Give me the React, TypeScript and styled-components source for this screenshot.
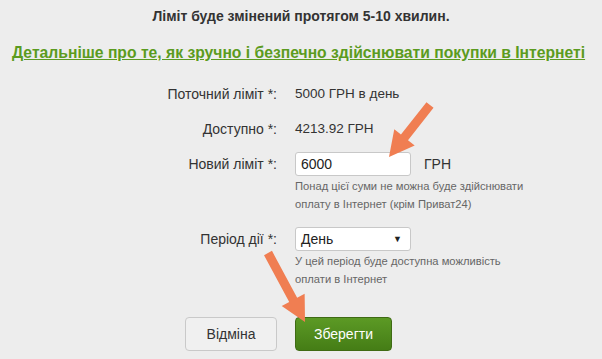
import React from "react"
import styled, { createGlobalStyle } from "styled-components"

const GlobalStyle = createGlobalStyle`
  html, body {
    margin: 0;
    padding: 0;
    background: #ededed;
  }
  body {
    font-family: "Liberation Sans", Arial, sans-serif;
    color: #333;
  }
`

const Page = styled.div`
  position: relative;
  width: 602px;
  height: 359px;
  overflow: hidden;
  background: #ededed;
`

const Notice = styled.div`
  padding-top: 8px;
  text-align: center;
  font-size: 14px;
  font-weight: bold;
  line-height: 17px;
  color: #333;
`

const MoreLink = styled.a`
  display: block;
  margin-top: 19px;
  padding-left: 12px;
  font-size: 15.7px;
  font-weight: bold;
  line-height: 18px;
  color: #5b9b20;
  text-decoration: underline;
  white-space: nowrap;
`

const Form = styled.div`
  display: grid;
  grid-template-columns: 277px 1fr;
  column-gap: 18px;
  margin-top: 10px;
`

const Label = styled.div<{ $top?: number }>`
  text-align: right;
  font-size: 14px;
  line-height: 16px;
  color: #333;
  padding-top: ${p => p.$top ?? 0}px;
`

const Value = styled.div<{ $top?: number }>`
  font-size: 13.5px;
  line-height: 16px;
  color: #333;
  padding-top: ${p => p.$top ?? 0}px;
`

const Field = styled.div`
  display: flex;
  align-items: center;
  gap: 13px;
`

const TextInput = styled.div`
  box-sizing: border-box;
  width: 116px;
  height: 24px;
  background: #fff;
  border: 1px solid #c8c8c8;
  border-radius: 3px;
  padding: 0 5px;
  font-size: 14px;
  line-height: 22px;
  color: #222;
`

const Select = styled(TextInput)`
  display: flex;
  justify-content: space-between;
  align-items: center;
  padding-right: 8px;
`

const Caret = styled.span`
  font-size: 9px;
  color: #222;
`

const Unit = styled.span`
  font-size: 14px;
  color: #333;
`

const Hint = styled.div`
  margin-top: 1px;
  font-size: 11.2px;
  line-height: 18px;
  color: #666;
`

const Buttons = styled.div`
  grid-column: 1 / span 2;
  display: grid;
  grid-template-columns: 277px 1fr;
  column-gap: 18px;
  margin-top: 29px;
`

const Button = styled.button<{ $primary?: boolean }>`
  box-sizing: border-box;
  height: 34px;
  width: ${p => (p.$primary ? "97px" : "92px")};
  justify-self: ${p => (p.$primary ? "start" : "end")};
  border-radius: 4px;
  font-family: "Liberation Sans", Arial, sans-serif;
  font-size: 14px;
  border: 1px solid ${p => (p.$primary ? "#3f6b14" : "#c9c9c9")};
  background: ${p =>
    p.$primary ? "linear-gradient(#5c9a25, #457d16)" : "#f0f0f0"};
  color: ${p => (p.$primary ? "#fff" : "#333")};
`

const Overlay = styled.svg`
  position: absolute;
  left: 0;
  top: 0;
  pointer-events: none;
`

const arrow = (x1: number, y1: number, x2: number, y2: number) => {
  const dx = x2 - x1
  const dy = y2 - y1
  const len = Math.hypot(dx, dy)
  const ux = dx / len
  const uy = dy / len
  const nx = -uy
  const ny = ux
  const head = 25
  const hw = 13
  const sw = 4.5
  const bx = x2 - ux * head
  const by = y2 - uy * head
  const pts = [
    [x1 + nx * sw, y1 + ny * sw],
    [bx + nx * sw, by + ny * sw],
    [bx + nx * hw, by + ny * hw],
    [x2, y2],
    [bx - nx * hw, by - ny * hw],
    [bx - nx * sw, by - ny * sw],
    [x1 - nx * sw, y1 - ny * sw],
  ]
  return pts.map(p => p.join(",")).join(" ")
}

export default function App() {
  return (
    <Page>
      <GlobalStyle />
      <Notice>Ліміт буде змінений протягом 5-10 хвилин.</Notice>
      <MoreLink>Детальніше про те, як зручно і безпечно здійснювати покупки в Інтернеті</MoreLink>
      <Form>
        <Label $top={14}>Поточний ліміт *:</Label>
        <Value $top={14}>5000 ГРН в день</Value>
        <Label $top={19}>Доступно *:</Label>
        <Value $top={19}>4213.92 ГРН</Value>
        <Label $top={19}>Новий ліміт *:</Label>
        <Value $top={15}>
          <Field>
            <TextInput>6000</TextInput>
            <Unit>ГРН</Unit>
          </Field>
          <Hint>
            Понад цієї суми не можна буде здійснювати
            <br />
            оплату в Інтернет (крім Приват24)
          </Hint>
        </Value>
        <Label $top={18}>Період дії *:</Label>
        <Value $top={14}>
          <Select>
            День
            <Caret>▼</Caret>
          </Select>
          <Hint>
            У цей період буде доступна можливість
            <br />
            оплати в Інтернет
          </Hint>
        </Value>
        <Buttons>
          <Button>Відміна</Button>
          <Button $primary>Зберегти</Button>
        </Buttons>
      </Form>
      <Overlay width="602" height="359">
        <polygon points={arrow(430, 105, 389, 157)} fill="#f07e52" />
        <polygon points={arrow(268, 253, 305, 322)} fill="#f07e52" />
      </Overlay>
    </Page>
  )
}
